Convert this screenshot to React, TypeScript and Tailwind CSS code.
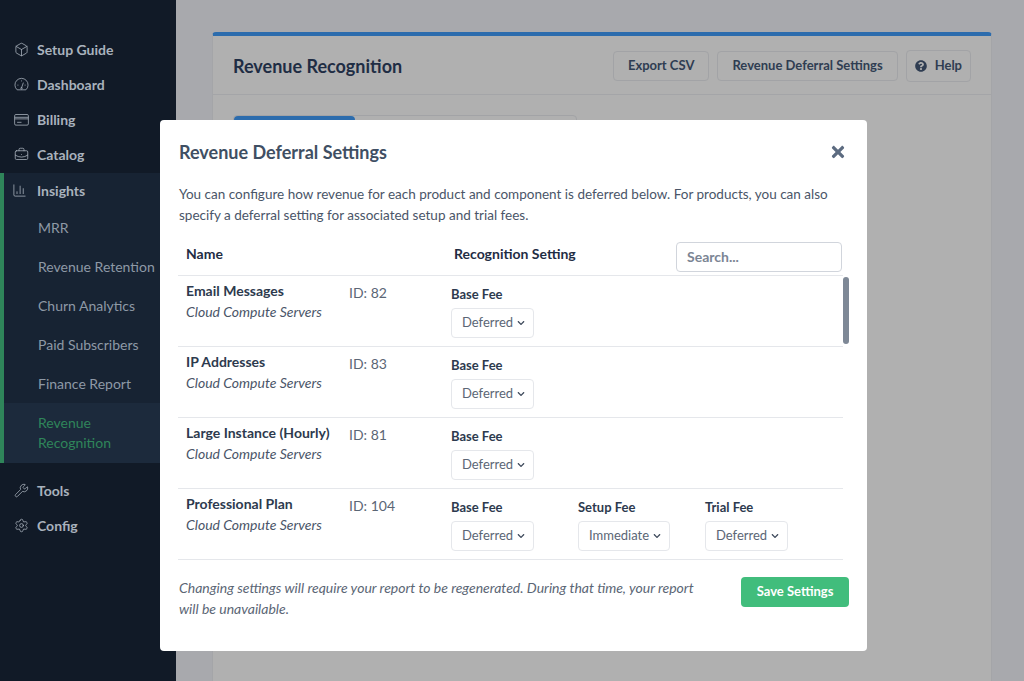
import { Box, BriefcaseBusiness, ChartColumn, Wrench, Settings } from "lucide-react";
import { FaTimes, FaQuestionCircle, FaChevronDown } from "react-icons/fa";

const font = { fontFamily: '"Lato", "Liberation Sans", sans-serif' };

function DashboardIcon() {
  return (
    <svg width="15" height="15" viewBox="0 0 24 24" fill="none" stroke="currentColor" strokeWidth="1.25" strokeLinejoin="round">
      <path d="M5 20.5A10.5 10.5 0 1 1 19 20.5Z" />
      <path d="M12 17.5L15 9M5.5 13H7M17 13h1.5M12 5.5V7" />
      <circle cx="12" cy="18" r="1.2" />
    </svg>
  );
}

function BillingIcon() {
  return (
    <svg width="15" height="15" viewBox="0 0 24 24" fill="none" stroke="currentColor" strokeWidth="1.25" strokeLinejoin="round">
      <rect x="1" y="4" width="22" height="17" rx="2" />
      <path d="M1 8.5h22M1 11h22" />
      <path d="M5 16.5h7" />
    </svg>
  );
}

function NavItem({ icon, label }: { icon: React.ReactNode; label: string }) {
  return (
    <div className="flex h-[35px] items-center gap-2 pl-3.5 text-sm font-bold text-[#a9b2bd]">
      {icon}
      <span>{label}</span>
    </div>
  );
}

function SubItem({ label }: { label: string }) {
  return <div className="flex h-[39px] items-center pl-8.5 text-sm text-[#8e99a6]">{label}</div>;
}

function Select({ value }: { value: string }) {
  return (
    <div className="inline-flex h-7.5 items-center gap-1 rounded border border-gray-200 bg-white pr-2 pl-2.5 text-[13px] text-[#5b6675]">
      <span>{value}</span>
      <FaChevronDown className="size-2 text-[#3f4b5c]" />
    </div>
  );
}

function Fee({ label, value }: { label: string; value: string }) {
  return (
    <div className="w-[127px] pt-2.5">
      <div className="text-[13px] leading-4 font-bold text-[#2d3a4e]">{label}</div>
      <div className="mt-1.5">
        <Select value={value} />
      </div>
    </div>
  );
}

function Row({ name, id, fees }: { name: string; id: string; fees: [string, string][] }) {
  return (
    <div className="flex h-[71px] border-b border-gray-200 pl-2">
      <div className="w-[163px] pt-1.25">
        <div className="text-sm leading-5 font-bold text-[#2d3a4e]">{name}</div>
        <div className="mt-px text-sm leading-5 text-[#4a5568] italic">Cloud Compute Servers</div>
      </div>
      <div className="w-[102px] pt-1.75 text-sm leading-5 text-[#5b6675]">ID: {id}</div>
      <div className="flex">
        {fees.map(([l, v]) => (
          <Fee key={l} label={l} value={v} />
        ))}
      </div>
    </div>
  );
}

const headerButton = "flex h-7.5 items-center rounded border border-[#a2a3a6] px-3.5 text-[13px] font-bold text-[#2f3d52]";

export default function App() {
  return (
    <div className="relative flex h-screen overflow-hidden bg-[#a8a9ad]" style={font}>
      <aside className="flex w-44 shrink-0 flex-col bg-[#111a27] pt-8">
        <NavItem icon={<Box size={15} strokeWidth={1.25} />} label="Setup Guide" />
        <NavItem icon={<DashboardIcon />} label="Dashboard" />
        <NavItem icon={<BillingIcon />} label="Billing" />
        <NavItem icon={<BriefcaseBusiness size={15} strokeWidth={1.25} />} label="Catalog" />
        <div className="mt-px border-l-4 border-[#2f855a] bg-[#172333]">
          <div className="flex h-[35px] items-center gap-2.5 pl-2 text-sm font-bold text-[#a9b2bd]">
            <ChartColumn size={15} strokeWidth={1.25} />
            <span>Insights</span>
          </div>
          <SubItem label="MRR" />
          <SubItem label="Revenue Retention" />
          <SubItem label="Churn Analytics" />
          <SubItem label="Paid Subscribers" />
          <SubItem label="Finance Report" />
          <div className="bg-[#1c2a3c] py-2.5 pl-8.5 text-sm text-[#2f855a]">
            Revenue
            <br />
            Recognition
          </div>
        </div>
        <div className="mt-2.5">
          <NavItem icon={<Wrench size={15} strokeWidth={1.25} />} label="Tools" />
          <NavItem icon={<Settings size={15} strokeWidth={1.25} />} label="Config" />
        </div>
      </aside>

      <main className="min-w-0 flex-1 pt-8 pr-8 pl-9">
        <div className="h-full rounded-t border-x border-t-4 border-[#a4a5a8] border-t-[#2c6cad] bg-[#b0b0b0]">
          <div className="flex h-[59px] items-center justify-between border-b border-[#a4a5a8] px-5 pt-0.5">
            <h1 className="text-lg font-bold text-[#1f2d44]">Revenue Recognition</h1>
            <div className="flex items-center gap-2">
              <div className={headerButton}>Export CSV</div>
              <div className={headerButton}>Revenue Deferral Settings</div>
              <div className="flex h-8 items-center gap-2 rounded border border-[#a2a3a6] px-2 text-[13px] font-bold text-[#2f3d52]">
                <FaQuestionCircle className="size-3" />
                Help
              </div>
            </div>
          </div>
          <div className="mt-5 ml-5 flex h-8 w-[344px] rounded-t border border-[#a2a3a6]">
            <div className="w-[121px] rounded-t bg-[#2c6cad]" />
          </div>
        </div>
      </main>

      <div className="absolute top-30 left-40 w-[707px] rounded bg-white pt-4.5 pb-8">
        <div className="flex items-center justify-between pr-5 pl-4.75">
          <h2 className="text-lg leading-7 font-bold text-[#3f4f63]">Revenue Deferral Settings</h2>
          <FaTimes className="size-4.5 text-[#5c6b80]" />
        </div>
        <p className="mt-4.5 px-4.75 text-[13.5px] leading-[21px] text-[#4a5568]">
          You can configure how revenue for each product and component is deferred below. For products, you can also specify a deferral setting for associated setup and trial fees.
        </p>
        <div className="mt-4 mr-6 ml-4.5 flex h-[34px] items-start border-b border-gray-200 pr-px pl-2">
          <div className="w-[268px] pt-0.5 text-sm leading-5 font-bold text-[#1f2d44]">Name</div>
          <div className="flex-1 pt-0.5 text-sm leading-5 font-bold text-[#1f2d44]">Recognition Setting</div>
          <div className="flex h-7.5 w-[166px] items-center rounded border border-gray-300 px-2.5 text-sm font-bold text-[#7b8594]">Search...</div>
        </div>
        <div className="relative mr-6 ml-4.5">
          <Row name="Email Messages" id="82" fees={[["Base Fee", "Deferred"]]} />
          <Row name="IP Addresses" id="83" fees={[["Base Fee", "Deferred"]]} />
          <Row name="Large Instance (Hourly)" id="81" fees={[["Base Fee", "Deferred"]]} />
          <Row
            name="Professional Plan"
            id="104"
            fees={[
              ["Base Fee", "Deferred"],
              ["Setup Fee", "Immediate"],
              ["Trial Fee", "Deferred"],
            ]}
          />
          <div className="absolute top-px -right-1.5 h-[67px] w-1.5 rounded-sm bg-[#7e8896]" />
        </div>
        <div className="mt-4.25 flex items-start justify-between pr-4.5 pl-4.75">
          <p className="w-[525px] text-sm leading-[21px] text-[#5b6675] italic">
            Changing settings will require your report to be regenerated. During that time, your report will be unavailable.
          </p>
          <div className="flex h-7.5 w-[108px] items-center justify-center rounded bg-[#41bd7c] text-[13px] font-bold text-white">Save Settings</div>
        </div>
      </div>
    </div>
  );
}
